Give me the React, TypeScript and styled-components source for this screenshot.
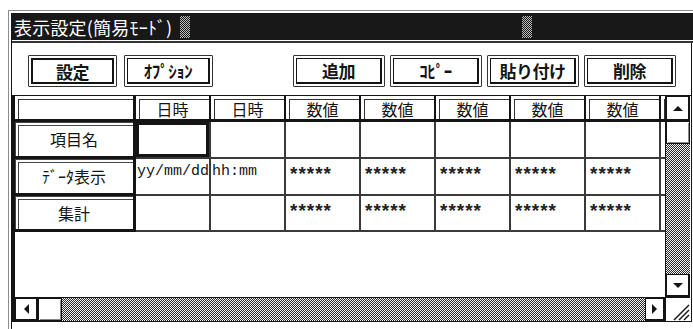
import styled, { createGlobalStyle } from "styled-components";

const GlobalStyle = createGlobalStyle`
  html, body { margin: 0; background: #fff; overflow: hidden; }
  * { box-sizing: border-box; }
`;

const JP = `"Noto Sans CJK JP", "Noto Sans", sans-serif`;
const MONO = `"Liberation Mono", "DejaVu Sans Mono", monospace`;
const INK = "#141414";
const CHECKER = `repeating-conic-gradient(#2a2a2a 0% 25%, #f4f4f4 0% 50%) 0 0 / 2px 2px`;

const SWindow = styled.div`
  margin: 10px 0 0 8px;
  width: 700px;
  height: 330px;
  border-top: 1px solid #8c8c8c;
  border-left: 1px solid #8c8c8c;
  padding: 2px 0 0 2px;
  background: #fff;
`;

const SFrame = styled.div`
  height: 100%;
  border-top: 1px solid ${INK};
  border-left: 1px solid ${INK};
`;

const STitleBar = styled.div`
  height: 26px;
  background: #181818;
  display: flex;
  align-items: center;
  padding-left: 2px;
`;

const STitle = styled.span`
  font-family: ${JP};
  font-size: 18px;
  line-height: 1;
  color: #fff;
  white-space: nowrap;
  letter-spacing: 0.2px;
`;

const SGrip = styled.span<{ $gap: number }>`
  margin-left: ${(p) => p.$gap}px;
  width: 10px;
  height: 22px;
  background: repeating-conic-gradient(#bbb 0% 25%, #181818 0% 50%) 0 0 / 2px 2px;
`;

const STitleRule = styled.div`
  height: 3px;
  border-top: 1px solid #fff;
  border-bottom: 2px solid #333;
`;

const SBody = styled.div`
  width: 680px;
  padding-top: 12px;
  border-right: 1px solid ${INK};
`;

const SToolbar = styled.div`
  display: flex;
  padding-left: 16px;
  height: 32px;
`;

const SButtonGroup = styled.div<{ $offset: number; $gap: number }>`
  display: flex;
  gap: ${(p) => p.$gap}px;
  margin-left: ${(p) => p.$offset}px;
`;

const SButton = styled.div<{ $width: number }>`
  width: ${(p) => p.$width}px;
  height: 32px;
  padding: 2px;
  border: 1px solid #333;
  border-radius: 1px;
  background: #fff;
`;

const SButtonFace = styled.span<{ $default?: boolean }>`
  display: flex;
  align-items: center;
  justify-content: center;
  height: 100%;
  border: 1px solid ${INK};
  border-right-width: 2px;
  border-bottom-width: 2px;
  ${(p) => p.$default && "border-width: 2px;"}
  font-family: ${JP};
  font-size: 17px;
  font-weight: 700;
  color: ${INK};
  letter-spacing: -0.5px;
`;

const SPanel = styled.div`
  margin-top: 8px;
  display: grid;
  grid-template-columns: 650px 25px;
  grid-template-rows: 201px 24px;
  border-left: 3px solid ${INK};
  border-top: 1px solid ${INK};
  border-bottom: 1px solid ${INK};
`;

const SViewport = styled.div`
  overflow: hidden;
  background: #fff;
`;

const SCellGrid = styled.div`
  display: grid;
  grid-template-columns: 121px repeat(8, 75px);
  grid-template-rows: 26px 37px 37px 36px;
  width: max-content;
`;

const SHeadCell = styled.div<{ $corner?: boolean }>`
  display: flex;
  justify-content: center;
  align-items: center;
  padding-top: 3px;
  border-right: ${(p) => (p.$corner ? 3 : 2)}px solid ${INK};
  border-bottom: 3px solid ${INK};
  box-shadow: inset 3px 3px 0 #fff, inset 4px 4px 0 #333;
  font-family: ${JP};
  font-size: 16px;
  line-height: 1;
  color: ${INK};
  overflow: hidden;
  white-space: nowrap;
`;

const SRowHead = styled.div`
  display: flex;
  justify-content: center;
  align-items: center;
  border-right: 3px solid ${INK};
  border-bottom: 3px solid ${INK};
  box-shadow: inset 1px 1px 0 #444, inset 3px 3px 0 #fff, inset 4px 4px 0 #444;
  font-family: ${JP};
  font-size: 16px;
  line-height: 1;
  color: ${INK};
`;

const SDataCell = styled.div<{ $selected?: boolean }>`
  padding: 5px 0 0 1px;
  border-right: 2px solid #3a3a3a;
  border-bottom: 2px solid #3a3a3a;
  ${(p) => p.$selected && `box-shadow: inset 0 0 0 3px ${INK};`}
  font-family: ${MONO};
  font-size: 15px;
  line-height: 1;
  color: ${INK};
  white-space: nowrap;
  overflow: hidden;
`;

const SStars = styled.span`
  display: block;
  margin-top: 2px;
  padding-left: 1px;
  font-size: 19px;
  font-weight: 700;
  letter-spacing: -3px;
  color: #222;
`;

const SVScroll = styled.div`
  display: flex;
  flex-direction: column;
  border-left: 1px solid ${INK};
`;

const SHScroll = styled.div`
  display: flex;
  border-top: 1px solid ${INK};
`;

const SArrowBtn = styled.div<{ $size: number }>`
  flex: 0 0 ${(p) => p.$size}px;
  display: flex;
  align-items: center;
  justify-content: center;
  background: #fff;
  border: 1px solid ${INK};
  border-right-width: 2px;
  border-bottom-width: 2px;
`;

const SThumb = styled.div<{ $size: number }>`
  flex: 0 0 ${(p) => p.$size}px;
  background: #fff;
  border: 1px solid ${INK};
  box-shadow: inset 1px 1px 0 #fff, inset -1px -1px 0 #888;
`;

const STrack = styled.div`
  flex: 1;
  background: ${CHECKER};
`;

const SCorner = styled.div`
  display: flex;
  align-items: flex-end;
  justify-content: flex-end;
  background: #fff;
  border-top: 1px solid ${INK};
  border-left: 1px solid ${INK};
`;

type Dir = "up" | "down" | "left" | "right";

function Arrow({ dir }: { dir: Dir }) {
  const pts: Record<Dir, string> = {
    up: "0,5 5,0 10,5",
    down: "0,0 10,0 5,5",
    left: "5,0 5,10 0,5",
    right: "0,0 5,5 0,10",
  };
  const vert = dir === "up" || dir === "down";
  return (
    <svg width={vert ? 10 : 5} height={vert ? 5 : 10}>
      <polygon points={pts[dir]} fill={INK} />
    </svg>
  );
}

function SizeGrip() {
  return (
    <svg width="22" height="22">
      <line x1="21" y1="6" x2="6" y2="21" stroke={INK} strokeWidth="1.5" />
      <line x1="21" y1="11" x2="11" y2="21" stroke={INK} strokeWidth="1.5" />
      <line x1="21" y1="16" x2="16" y2="21" stroke={INK} strokeWidth="1.5" />
    </svg>
  );
}

const headers = ["日時", "日時", "数値", "数値", "数値", "数値", "数値", "数値"];
const stars = "*****";

function App() {
  return (
    <>
      <GlobalStyle />
      <SWindow>
        <SFrame>
          <STitleBar>
            <STitle>表示設定(簡易ﾓｰﾄﾞ)</STitle>
            <SGrip $gap={8} />
            <SGrip $gap={332} />
          </STitleBar>
          <STitleRule />
          <SBody>
            <SToolbar>
              <SButtonGroup $offset={0} $gap={7}>
                <SButton $width={89}>
                  <SButtonFace $default>設定</SButtonFace>
                </SButton>
                <SButton $width={89}>
                  <SButtonFace>ｵﾌﾟｼｮﾝ</SButtonFace>
                </SButton>
              </SButtonGroup>
              <SButtonGroup $offset={80} $gap={5}>
                <SButton $width={92}>
                  <SButtonFace>追加</SButtonFace>
                </SButton>
                <SButton $width={92}>
                  <SButtonFace>ｺﾋﾟｰ</SButtonFace>
                </SButton>
                <SButton $width={92}>
                  <SButtonFace>貼り付け</SButtonFace>
                </SButton>
                <SButton $width={92}>
                  <SButtonFace>削除</SButtonFace>
                </SButton>
              </SButtonGroup>
            </SToolbar>

            <SPanel>
              <SViewport>
                <SCellGrid>
                  <SHeadCell $corner />
                  {headers.map((h, i) => (
                    <SHeadCell key={i}>{h}</SHeadCell>
                  ))}

                  <SRowHead>項目名</SRowHead>
                  {headers.map((_, i) => (
                    <SDataCell key={i} $selected={i === 0} />
                  ))}

                  <SRowHead>ﾃﾞｰﾀ表示</SRowHead>
                  <SDataCell>yy/mm/dd</SDataCell>
                  <SDataCell>hh:mm</SDataCell>
                  {headers.slice(2).map((_, i) => (
                    <SDataCell key={i}>
                      <SStars>{stars}</SStars>
                    </SDataCell>
                  ))}

                  <SRowHead>集計</SRowHead>
                  <SDataCell />
                  <SDataCell />
                  {headers.slice(2).map((_, i) => (
                    <SDataCell key={i}>
                      <SStars>{stars}</SStars>
                    </SDataCell>
                  ))}
                </SCellGrid>
              </SViewport>

              <SVScroll>
                <SArrowBtn $size={25}>
                  <Arrow dir="up" />
                </SArrowBtn>
                <SThumb $size={23} />
                <STrack />
                <SArrowBtn $size={23}>
                  <Arrow dir="down" />
                </SArrowBtn>
              </SVScroll>

              <SHScroll>
                <SArrowBtn $size={23}>
                  <Arrow dir="left" />
                </SArrowBtn>
                <SThumb $size={24} />
                <STrack />
                <SArrowBtn $size={20}>
                  <Arrow dir="right" />
                </SArrowBtn>
              </SHScroll>

              <SCorner>
                <SizeGrip />
              </SCorner>
            </SPanel>
          </SBody>
        </SFrame>
      </SWindow>
    </>
  );
}

export default App;
